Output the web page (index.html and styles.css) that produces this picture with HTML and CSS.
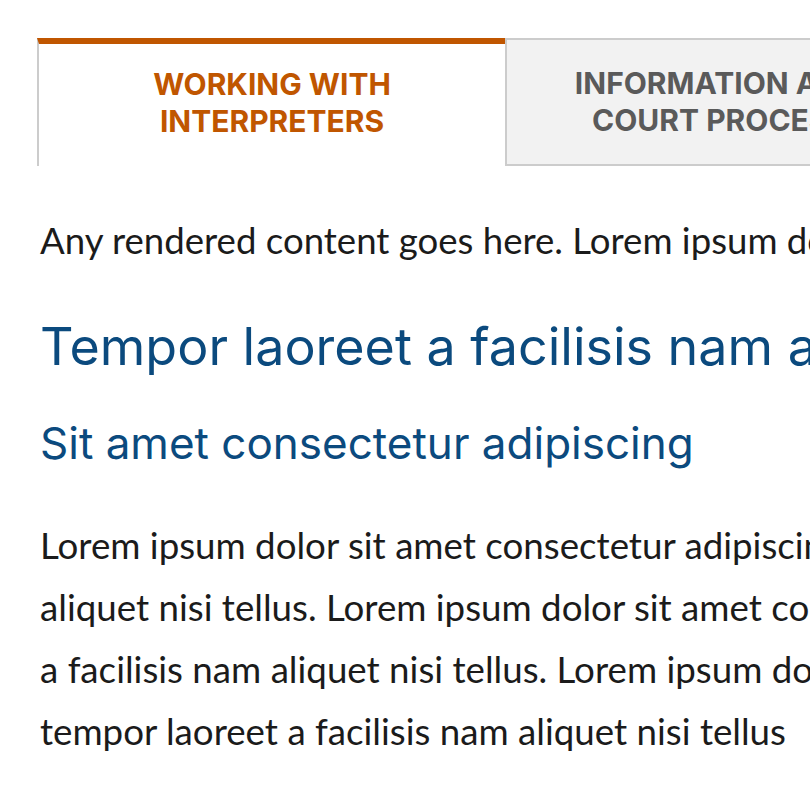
FILE: index.html
```html
<!DOCTYPE html>
<html lang="en">
<head>
<meta charset="utf-8">
<link rel="stylesheet" href="styles.css">
</head>
<body>
<div class="page">
  <div class="tabs">
    <div class="tab tab-active">WORKING WITH<br>INTERPRETERS</div>
    <div class="tab tab-inactive">INFORMATION ABOUT<br>COURT PROCESSES</div>
  </div>
  <div class="content">
    <p class="intro">Any rendered content goes here. Lorem ipsum dolor sit amet consectetur</p>
    <h2 class="h2">Tempor laoreet a facilisis nam aliquet</h2>
    <h3 class="h3">Sit amet consectetur adipiscing</h3>
    <p class="body">Lorem ipsum dolor sit amet consectetur adipiscing elit tempor laoreet a facilisis nam<br>aliquet nisi tellus. Lorem ipsum dolor sit amet consectetur adipiscing elit tempor laoreet<br>a facilisis nam aliquet nisi tellus. Lorem ipsum dolor sit amet consectetur adipiscing elit<br>tempor laoreet a facilisis nam aliquet nisi tellus</p>
  </div>
</div>
</body>
</html>
```
FILE: styles.css
```css
html, body {
  margin: 0;
  padding: 0;
  background: #ffffff;
  overflow: hidden;
}
.page {
  padding: 38px 0 0 37px;
  width: 1500px;
}
.tabs {
  display: flex;
  height: 128px;
}
.tab {
  box-sizing: border-box;
  width: 468px;
  height: 128px;
  display: flex;
  align-items: center;
  justify-content: center;
  text-align: center;
  font-family: Inter, "Noto Sans", sans-serif;
  font-weight: 700;
  font-size: 30px;
  line-height: 37px;
}
.tab-active {
  border-top: 6px solid #c05600;
  border-left: 2px solid #cccccc;
  padding-bottom: 5px;
  color: #c05600;
  background: #ffffff;
}
.tab-inactive {
  border: 2px solid #cccccc;
  background: #f2f2f2;
  color: #5a5a5a;
}
.content {
  padding-left: 3px;
  width: 1400px;
}
.intro {
  font-family: Lato, sans-serif;
  font-size: 36.6px;
  color: #1b1b1b;
  margin: 47px 0 0 0;
  line-height: 1.5;
  white-space: nowrap;
}
.h2 {
  font-family: Inter, sans-serif;
  font-weight: 400;
  font-size: 52px;
  color: #0b4a7e;
  margin: 45px 0 0 0;
  line-height: 1.3;
  white-space: nowrap;
}
.h3 {
  font-family: Inter, sans-serif;
  font-weight: 400;
  font-size: 44px;
  color: #0b4a7e;
  margin: 35px 0 0 0;
  line-height: 1.3;
  white-space: nowrap;
}
.body {
  font-family: Lato, sans-serif;
  font-size: 36.7px;
  color: #1b1b1b;
  line-height: 62px;
  margin: 41px 0 0 0;
  white-space: nowrap;
}
```
